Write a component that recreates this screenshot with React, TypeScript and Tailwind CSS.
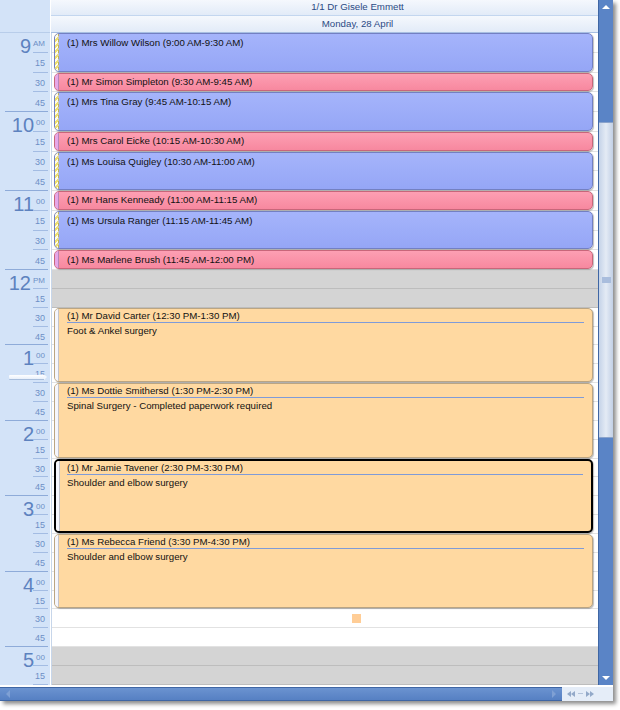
import React from 'react';

type Tone = 'blue' | 'pink' | 'peach';

type Appointment = {
  id: number;
  name: string;
  time: string;
  note?: string;
  rows: string;
  tone: Tone;
  selected?: boolean;
};

const appointments: Appointment[] = [
  { id: 1, name: 'Mrs Willow Wilson', time: '9:00 AM-9:30 AM', rows: 'row-[1/span_2]', tone: 'blue' },
  { id: 2, name: 'Mr Simon Simpleton', time: '9:30 AM-9:45 AM', rows: 'row-[3/span_1]', tone: 'pink' },
  { id: 3, name: 'Mrs Tina Gray', time: '9:45 AM-10:15 AM', rows: 'row-[4/span_2]', tone: 'blue' },
  { id: 4, name: 'Mrs Carol Eicke', time: '10:15 AM-10:30 AM', rows: 'row-[6/span_1]', tone: 'pink' },
  { id: 5, name: 'Ms Louisa Quigley', time: '10:30 AM-11:00 AM', rows: 'row-[7/span_2]', tone: 'blue' },
  { id: 6, name: 'Mr Hans Kenneady', time: '11:00 AM-11:15 AM', rows: 'row-[9/span_1]', tone: 'pink' },
  { id: 7, name: 'Ms Ursula Ranger', time: '11:15 AM-11:45 AM', rows: 'row-[10/span_2]', tone: 'blue' },
  { id: 8, name: 'Ms Marlene Brush', time: '11:45 AM-12:00 PM', rows: 'row-[12/span_1]', tone: 'pink' },
  { id: 9, name: 'Mr David Carter', time: '12:30 PM-1:30 PM', note: 'Foot & Ankel surgery', rows: 'row-[15/span_4]', tone: 'peach' },
  { id: 10, name: 'Ms Dottie Smithersd', time: '1:30 PM-2:30 PM', note: 'Spinal Surgery - Completed paperwork required', rows: 'row-[19/span_4]', tone: 'peach' },
  { id: 11, name: 'Mr Jamie Tavener', time: '2:30 PM-3:30 PM', note: 'Shoulder and elbow surgery', rows: 'row-[23/span_4]', tone: 'peach', selected: true },
  { id: 12, name: 'Ms Rebecca Friend', time: '3:30 PM-4:30 PM', note: 'Shoulder and elbow surgery', rows: 'row-[27/span_4]', tone: 'peach' },
];

const tones: Record<Tone, { body: string; border: string; stripe: string }> = {
  blue: {
    body: 'bg-linear-to-b from-[#a5b4fb] to-[#95a6f6]',
    border: 'border-[#7380c2]',
    stripe: 'bg-[image:repeating-linear-gradient(135deg,#eee070_0px,#eee070_2px,#fffce8_2px,#fffce8_4px)]',
  },
  pink: {
    body: 'bg-linear-to-b from-[#fd9fb3] to-[#f7889f]',
    border: 'border-[#c8667a]',
    stripe: 'bg-[#e6a7e8]',
  },
  peach: {
    body: 'bg-[#ffd9a1]',
    border: 'border-[#bba582]',
    stripe: 'bg-[#f5f6fd]',
  },
};

const hours = [
  { h: '9', sup: 'AM' },
  { h: '10', sup: '00' },
  { h: '11', sup: '00' },
  { h: '12', sup: 'PM' },
  { h: '1', sup: '00' },
  { h: '2', sup: '00' },
  { h: '3', sup: '00' },
  { h: '4', sup: '00' },
  { h: '5', sup: '00' },
];

// 15 minute slots from 9:00 to 5:30
const slots = hours
  .flatMap((hour, hi) =>
    ['00', '15', '30', '45'].map((min, mi) => ({
      key: `${hi}-${mi}`,
      hour: mi === 0 ? hour : null,
      min,
      hourEnd: mi === 3,
    }))
  )
  .slice(0, 34)
  .map((s, i) => ({ ...s, index: i, off: i === 12 || i === 13 || i >= 32 }));

const rowsTemplate = 'grid grid-rows-[repeat(12,19.75px)_repeat(22,18.86px)]';

function Card({ a }: { a: Appointment }) {
  const t = tones[a.tone];
  const label = `(1) ${a.name} (${a.time})`;
  return (
    <div
      className={`${a.rows} col-start-1 mb-px ml-[2px] mr-[5px] flex overflow-hidden rounded-[5px] shadow-[1px_1px_1px_rgba(0,0,0,0.25)] ${
        a.selected ? 'border-2 border-black' : `border ${t.border}`
      } ${t.body}`}
    >
      <div className={`w-[4px] shrink-0 border-r border-black/20 ${t.stripe}`} />
      {a.note ? (
        <div className={`flex-1 pr-[8px] pt-px ${a.selected ? 'pl-[7px]' : 'pl-[8px]'}`}>
          <div className="border-b border-[#7f9bd8] pb-0 leading-[12px]">{label}</div>
          <div className="pt-[2px] leading-[12px]">{a.note}</div>
        </div>
      ) : a.tone === 'pink' ? (
        <div className="flex flex-1 items-center pl-[8px] leading-[12px]">{label}</div>
      ) : (
        <div className="flex-1 pl-[8px] pt-[3px] leading-[12px]">{label}</div>
      )}
    </div>
  );
}

function TimeRuler() {
  return (
    <div className={`${rowsTemplate} bg-[#d3e3f8]`}>
      {slots.map((s) => (
        <div key={s.key} className="relative flex flex-col">
          {s.hour ? (
            <div className="flex min-h-0 flex-1 items-start justify-end pr-[5px] pt-[3px]">
              <span className="text-[20px] leading-none text-[#5d82bf]">{s.hour.h}</span>
              <span className="ml-[2px] mt-[4px] text-[8px] leading-none text-[#6d8fc6]">{s.hour.sup}</span>
            </div>
          ) : (
            <div className="flex min-h-0 flex-1 items-center justify-end pr-[5px] pt-[3px]">
              <span className="text-[9px] leading-none text-[#6d8fc6]">{s.min}</span>
            </div>
          )}
          <div className={s.hourEnd ? 'ml-[5px] mr-[2px] h-px bg-[#8eabd9]' : 'ml-[33px] mr-[2px] h-px bg-[#a3bce3]'} />
          {s.index === 17 && (
            // current time marker
            <div className="absolute bottom-[4px] left-[9px] flex h-[5px] w-[38px] items-center">
              <div className="h-[4px] flex-1 rounded-l-[1px] bg-linear-to-b from-white to-[#e8f0fb] shadow-[0_1px_0_rgba(90,120,170,0.35)]" />
              <div className="h-0 w-0 border-y-[3px] border-l-[3px] border-y-transparent border-l-[#f3f7fd]" />
            </div>
          )}
        </div>
      ))}
    </div>
  );
}

function DayGrid() {
  return (
    <div className={`${rowsTemplate} grid-cols-1 border-l border-[#c7d6ea]`}>
      <div className={`${rowsTemplate} col-start-1 row-[1/-1]`}>
        {slots.map((s) => (
          <div
            key={s.key}
            className={s.off ? 'border-b border-[#bdbdbd] bg-[#d4d4d4]' : 'border-b border-[#e2e2e2] bg-white'}
          >
            {s.index === 30 && <div className="ml-[300px] mt-[5px] h-[9px] w-[9px] bg-[#ffcd96]" />}
          </div>
        ))}
      </div>
      {appointments.map((a) => (
        <Card key={a.id} a={a} />
      ))}
    </div>
  );
}

function VerticalScroll() {
  return (
    <div className="flex w-[15px] flex-col border-l border-[#3f66a4] bg-[#5a84c6]">
      <div className="flex h-[14px] items-center justify-center">
        <div className="h-0 w-0 border-x-[4px] border-b-[4px] border-x-transparent border-b-white" />
      </div>
      <div className="h-[108px]" />
      <div className="flex h-[316px] items-center justify-center border-y border-[#8aa3cc] bg-linear-to-r from-[#c5d3e8] via-[#e4ebf5] to-[#c2d0e6]">
        <div className="h-[6px] w-[9px] bg-[#a9bddd]" />
      </div>
      <div className="flex-1" />
      <div className="flex h-[14px] items-center justify-center">
        <div className="h-0 w-0 border-x-[4px] border-t-[4px] border-x-transparent border-t-white" />
      </div>
    </div>
  );
}

function NavArrows({ dir }: { dir: 'left' | 'right' }) {
  const pts = dir === 'left' ? ['4,0 0,3 4,6', '8,0 4,3 8,6'] : ['0,0 4,3 0,6', '4,0 8,3 4,6'];
  return (
    <svg width="8" height="6" viewBox="0 0 8 6">
      {pts.map((p) => (
        <polygon key={p} points={p} fill="#93a9c9" />
      ))}
    </svg>
  );
}

export default function App() {
  return (
    <div className="h-[710px] w-[620px] bg-white font-['Liberation_Sans',Arial,sans-serif] text-[9.7px] text-[#111]">
      <div className="flex w-[613px] flex-col shadow-[3px_3px_4px_rgba(0,0,0,0.45)]">
        <div className="flex">
          <div className="flex w-[51px] shrink-0 flex-col border-r border-white">
            <div className="h-[33px] border-b border-[#b8cdea] bg-[#d3e3f8]" />
            <TimeRuler />
          </div>
          <div className="flex min-w-0 flex-1 flex-col">
            <div className="flex h-[16px] items-center justify-center border-b border-[#c3d6ef] bg-linear-to-b from-[#f5f8fd] to-[#e2ebf8] pl-[66px] text-[#2b4a84]">
              1/1 Dr Gisele Emmett
            </div>
            <div className="flex h-[17px] items-center justify-center border-b border-[#a7bfe2] bg-linear-to-b from-[#f5f8fd] to-[#e2ebf8] pl-[66px] text-[#2b4a84]">
              Monday, 28 April
            </div>
            <DayGrid />
          </div>
          <VerticalScroll />
        </div>
        <div className="flex h-[16px] border-t-2 border-white">
          <div className="flex w-[562px] items-center justify-between border-y border-[#3f66a4] bg-linear-to-b from-[#6b93d0] to-[#5680c3] px-[6px]">
            <div className="h-0 w-0 border-y-[4px] border-r-[4px] border-y-transparent border-r-[#7fa0d4]" />
            <div className="h-0 w-0 border-y-[4px] border-l-[4px] border-y-transparent border-l-[#7fa0d4]" />
          </div>
          <div className="flex flex-1 items-center gap-[3px] bg-[#e5edf8] pl-[5px]">
            <NavArrows dir="left" />
            <div className="h-px w-[5px] bg-[#b3c3da]" />
            <NavArrows dir="right" />
          </div>
        </div>
      </div>
    </div>
  );
}
